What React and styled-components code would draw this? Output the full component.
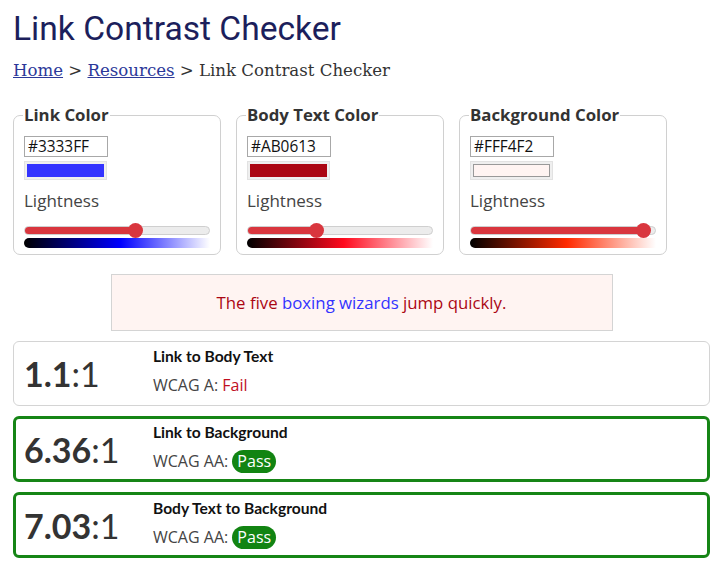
import React from "react";
import styled, { createGlobalStyle } from "styled-components";

const Global = createGlobalStyle`
  html, body { margin: 0; padding: 0; background: #fff; }
  body { padding: 0 10px 0 13px; font-family: "Open Sans", sans-serif; color: #333; }
`;

const Title = styled.h1`
  margin: 10px 0 0;
  font-family: Roboto, sans-serif;
  font-weight: 400;
  font-size: 33.6px;
  line-height: 38px;
  color: #1c1f5c;
`;

const Crumbs = styled.nav`
  margin-top: 13px;
  font-family: "DejaVu Serif", serif;
  font-size: 16.6px;
  line-height: 20px;
  color: #333;
  a { color: #2b3899; text-decoration: underline; }
`;

const Pickers = styled.div`
  display: flex;
  gap: 15px;
  margin-top: 22px;
`;

const Fieldset = styled.fieldset`
  width: 208px;
  box-sizing: border-box;
  margin: 0;
  padding: 9px 10px 6px;
  border: 1px solid #d0d0d0;
  border-radius: 7px;
`;

const Legend = styled.legend`
  padding: 0 1px;
  margin-left: -1px;
  font-family: "Open Sans", sans-serif;
  font-weight: 700;
  font-size: 16.8px;
  line-height: 24px;
  color: #333;
`;

const HexInput = styled.div`
  width: 84px;
  height: 21px;
  box-sizing: border-box;
  border: 1px solid #a8a8a8;
  padding: 0 3px;
  font-family: "Open Sans", sans-serif;
  font-size: 15.4px;
  line-height: 19px;
  color: #111;
`;

const Swatch = styled.div`
  margin-top: 4px;
  width: 83px;
  height: 19px;
  box-sizing: border-box;
  padding: 2px;
  background: #efefef;
  border: 1px solid #e2e2e2;
  div {
    height: 100%;
    background: ${(p) => p.$color};
    border: 1px solid ${(p) => p.$edge || "transparent"};
    box-sizing: border-box;
  }
`;

const Label = styled.div`
  margin-top: 10px;
  font-size: 17px;
  line-height: 22px;
  color: #444;
`;

const Track = styled.div`
  position: relative;
  margin-top: 14px;
  height: 9px;
  border-radius: 5px;
  background: #ececec;
  border: 1px solid #cfcfcf;
  box-sizing: border-box;
`;

const Fill = styled.div`
  height: 100%;
  border-radius: 5px;
  background: #d9363e;
`;

const Thumb = styled.div`
  position: absolute;
  top: 50%;
  width: 15px;
  height: 15px;
  margin: -7.5px 0 0 -7.5px;
  border-radius: 50%;
  background: #d9363e;
`;

const Gradient = styled.div`
  margin-top: 3px;
  height: 10px;
  border-radius: 5px 0 0 5px;
  background: linear-gradient(to right, #000 0%, ${(p) => p.$hue} 52%, rgba(255,255,255,0.9) 100%);
`;

const Sample = styled.div`
  width: 502px;
  height: 57px;
  box-sizing: border-box;
  margin: 19px auto 0;
  background: #fff4f2;
  border: 1px solid #d4d4d4;
  display: flex;
  align-items: center;
  justify-content: center;
  font-size: 16.8px;
  color: #ab0613;
  span { color: #3333ff; }
`;

const Results = styled.div`
  display: flex;
  flex-direction: column;
  gap: 10px;
  margin-top: 10px;
`;

const Result = styled.div`
  display: flex;
  align-items: center;
  height: ${(p) => (p.$pass ? "66px" : "65px")};
  box-sizing: border-box;
  padding: 0 10px;
  border: ${(p) => (p.$pass ? "3px solid #168516" : "1px solid #d4d4d4")};
  border-radius: 6px;
`;

const Ratio = styled.div`
  width: 129px;
  flex: none;
  font-family: Lato, sans-serif;
  font-size: 34px;
  color: #333;
  margin-left: ${(p) => (p.$pass ? "-2px" : "0")};
  b { font-weight: 700; }
`;

const Info = styled.div`
  display: flex;
  flex-direction: column;
  gap: 8px;
  margin-top: -3px;
`;

const Heading = styled.div`
  font-family: Lato, sans-serif;
  font-weight: 700;
  font-size: 15.6px;
  line-height: 18px;
  color: #111;
`;

const Level = styled.div`
  font-size: 16px;
  color: #444;
  line-height: 24px;
`;

const Fail = styled.span`
  color: #c0101e;
`;

const Badge = styled.span`
  display: inline-block;
  padding: 0 5px;
  border-radius: 12px;
  background: #128412;
  color: #fff;
  line-height: 23px;
`;

const pickers = [
  { name: "Link Color", hex: "#3333FF", color: "#3333ff", hue: "#0000ff", pos: 0.6 },
  { name: "Body Text Color", hex: "#AB0613", color: "#ab0613", hue: "#ff0a1e", pos: 0.37 },
  { name: "Background Color", hex: "#FFF4F2", color: "#fff4f2", hue: "#ff2a00", pos: 0.94, edge: "#999" },
];

const results = [
  { r: "1.1", title: "Link to Body Text", level: "WCAG A:", pass: false },
  { r: "6.36", title: "Link to Background", level: "WCAG AA:", pass: true },
  { r: "7.03", title: "Body Text to Background", level: "WCAG AA:", pass: true },
];

export default function App() {
  return (
    <>
      <Global />
      <Title>Link Contrast Checker</Title>
      <Crumbs>
        <a href="#">Home</a> &gt; <a href="#">Resources</a> &gt; Link Contrast Checker
      </Crumbs>
      <Pickers>
        {pickers.map((p) => (
          <Fieldset key={p.name}>
            <Legend>{p.name}</Legend>
            <HexInput>{p.hex}</HexInput>
            <Swatch $color={p.color} $edge={p.edge}>
              <div />
            </Swatch>
            <Label>Lightness</Label>
            <Track>
              <Fill style={{ width: `${p.pos * 100}%` }} />
              <Thumb style={{ left: `${p.pos * 100}%` }} />
            </Track>
            <Gradient $hue={p.hue} />
          </Fieldset>
        ))}
      </Pickers>
      <Sample>
        <div>
          The five <span>boxing wizards</span> jump quickly.
        </div>
      </Sample>
      <Results>
        {results.map((r) => (
          <Result key={r.title} $pass={r.pass}>
            <Ratio $pass={r.pass}>
              <b>{r.r}</b>:1
            </Ratio>
            <Info>
              <Heading>{r.title}</Heading>
              <Level>
                {r.level} {r.pass ? <Badge>Pass</Badge> : <Fail>Fail</Fail>}
              </Level>
            </Info>
          </Result>
        ))}
      </Results>
    </>
  );
}
